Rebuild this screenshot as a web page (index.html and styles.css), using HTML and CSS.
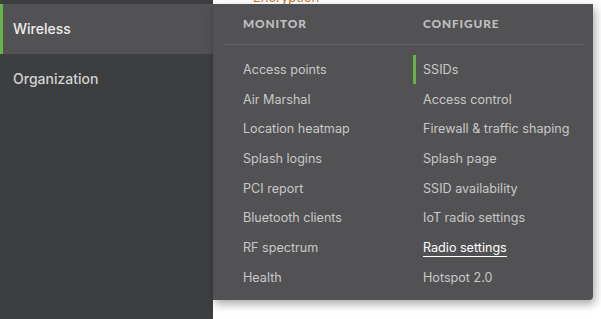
FILE: index.html
```html
<!DOCTYPE html>
<html>
<head>
<meta charset="utf-8">
<link rel="stylesheet" href="styles.css">
</head>
<body>
<div class="app">
  <nav class="sidebar">
    <div class="side-item active">Wireless</div>
    <div class="side-item">Organization</div>
  </nav>
  <main class="main">
    <div class="crumb">Encryption</div>
  </main>
  <div class="flyout">
    <div class="col">
      <div class="col-head">MONITOR</div>
      <ul class="links">
        <li>Access points</li>
        <li>Air Marshal</li>
        <li>Location heatmap</li>
        <li>Splash logins</li>
        <li>PCI report</li>
        <li>Bluetooth clients</li>
        <li>RF spectrum</li>
        <li>Health</li>
      </ul>
    </div>
    <div class="col">
      <div class="col-head">CONFIGURE</div>
      <ul class="links">
        <li class="current">SSIDs</li>
        <li>Access control</li>
        <li>Firewall &amp; traffic shaping</li>
        <li>Splash page</li>
        <li>SSID availability</li>
        <li>IoT radio settings</li>
        <li class="hover"><span>Radio settings</span></li>
        <li>Hotspot 2.0</li>
      </ul>
    </div>
    <div class="divider"></div>
  </div>
</div>
</body>
</html>
```
FILE: styles.css
```css
* { box-sizing: border-box; }
html, body { margin: 0; padding: 0; }
body {
  width: 601px;
  height: 319px;
  overflow: hidden;
  background: #ffffff;
  font-family: Inter, "Noto Sans", sans-serif;
}
.app {
  position: relative;
  display: flex;
  height: 319px;
}
.sidebar {
  width: 213px;
  flex: none;
  background: #3d3e40;
  padding-top: 4px;
}
.side-item {
  height: 50px;
  line-height: 50px;
  padding-left: 13px;
  font-size: 14px;
  font-weight: 500;
  color: #d2d2d2;
}
.side-item.active {
  padding-left: 10px;
  background: #525254;
  border-left: 3px solid #67b346;
  color: #ececec;
}
.main {
  flex: 1;
  position: relative;
}
.crumb {
  margin: -11px 0 0 40px;
  font-size: 13px;
  color: #c9772c;
}
.flyout {
  position: absolute;
  left: 213px;
  top: 4px;
  width: 380px;
  height: 296px;
  background: #525254;
  border-radius: 0 0 4px 0;
  box-shadow: 2px 4px 10px rgba(0, 0, 0, 0.35);
  display: grid;
  grid-template-columns: 180px 1fr;
  padding-left: 30px;
}
.divider {
  position: absolute;
  left: 10px;
  right: 10px;
  top: 40px;
  height: 1px;
  background: #636365;
}
.col-head {
  height: 40px;
  line-height: 40px;
  font-family: Lato, "Open Sans", sans-serif;
  font-weight: 900;
  font-size: 11.8px;
  letter-spacing: 0.9px;
  color: #c0c0c0;
}
.links {
  list-style: none;
  margin: 0;
  padding: 11px 0 0 0;
}
.links li {
  position: relative;
  height: 29.7px;
  line-height: 29.7px;
  font-size: 12.6px;
  color: #c8c8c8;
  white-space: nowrap;
}
.links li.current::before {
  content: "";
  position: absolute;
  left: -10px;
  top: 0;
  width: 3px;
  height: 29px;
  background: #67b346;
}
.links li.hover span {
  color: #ffffff;
  border-bottom: 1px solid #ffffff;
  padding-bottom: 1px;
}
```
